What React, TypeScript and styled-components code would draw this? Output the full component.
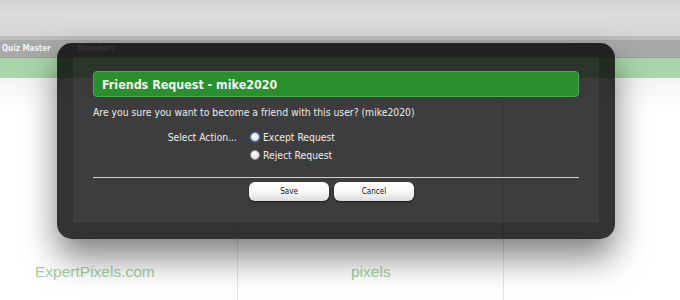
import React from "react";
import styled, { createGlobalStyle } from "styled-components";

const Global = createGlobalStyle`
  html, body { margin: 0; padding: 0; background: #ffffff; }
  body { width: 680px; height: 300px; overflow: hidden; font-family: "DejaVu Sans Condensed", "DejaVu Sans", Verdana, sans-serif; }
`;

const Page = styled.div`
  position: relative;
  width: 680px;
  height: 300px;
  display: flex;
  flex-direction: column;
  background: #ffffff;
  overflow: hidden;
`;

const TopArea = styled.div`
  height: 36px;
  background: linear-gradient(#d2d2d2, #dcdcdc 40%, #d6d6d6);
  border-bottom: 4px solid #bdbdbd;
`;

const NavBar = styled.div`
  height: 17px;
  background: #a9a9a9;
  display: flex;
  align-items: center;
  gap: 27px;
  padding-left: 2px;
  border-bottom: 1px solid #9c9c9c;
`;

const NavItem = styled.span`
  font-size: 8px;
  font-weight: bold;
  color: #f4f4f4;
`;

const GreenBar = styled.div`
  height: 20px;
  background: #a9d6a8;
`;

const Content = styled.div`
  flex: 1;
  display: grid;
  grid-template-columns: 224px 14px 266px 1fr;
  background: linear-gradient(#f3f3f3, #ffffff 30px);
`;

const Column = styled.div<{ $line?: boolean }>`
  position: relative;
  border-right: 1px solid ${(p) => (p.$line ? "#e6e6e6" : "transparent")};
  display: flex;
  align-items: flex-end;
  padding-bottom: 19px;
`;

const BrandText = styled.span<{ $indent: number }>`
  font-family: "Liberation Sans", Arial, sans-serif;
  font-size: 15.5px;
  color: #a6d0a6;
  padding-left: ${(p) => p.$indent}px;
`;

const Modal = styled.div`
  position: absolute;
  left: 57px;
  top: 43px;
  width: 558px;
  height: 196px;
  box-sizing: border-box;
  padding: 14px 16px 16px 16px;
  border-radius: 15px;
  background: rgba(0, 0, 0, 0.8);
  box-shadow: 0 18px 34px rgba(0, 0, 0, 0.5);
  display: flex;
`;

const Panel = styled.div`
  flex: 1;
  background: rgba(255, 255, 255, 0.05);
  padding: 14px 20px 0;
  display: flex;
  flex-direction: column;
`;

const Header = styled.div`
  height: 26px;
  box-sizing: border-box;
  border: 1px solid #55a655;
  border-radius: 4px;
  background: #2a902e;
  display: flex;
  align-items: center;
  padding-left: 8px;
  font-size: 12.4px;
  font-weight: bold;
  color: #f2f2f2;
`;

const Question = styled.div`
  margin-top: 9px;
  font-size: 10.3px;
  color: #ececec;
  line-height: 12px;
`;

const Form = styled.div`
  margin-top: 13px;
  display: grid;
  grid-template-columns: 144px 1fr;
  column-gap: 13px;
  row-gap: 6px;
  align-items: center;
`;

const Label = styled.span<{ $hidden?: boolean }>`
  text-align: right;
  font-size: 10.3px;
  color: #ececec;
  visibility: ${(p) => (p.$hidden ? "hidden" : "visible")};
`;

const Option = styled.label`
  display: flex;
  align-items: center;
  gap: 3px;
  font-size: 10.3px;
  color: #ececec;
  height: 12px;
`;

const Radio = styled.input<{ $focus?: boolean }>`
  appearance: none;
  margin: 0;
  width: 10px;
  height: 10px;
  border-radius: 50%;
  background: radial-gradient(circle at 40% 35%, #ffffff, #dcdcdc 70%, #bdbdbd);
  border: 1px solid ${(p) => (p.$focus ? "#5b6ea8" : "#9a9a9a")};
  box-shadow: ${(p) => (p.$focus ? "0 0 0 1px #3f4f80" : "none")};
`;

const Divider = styled.div`
  margin-top: 16px;
  height: 1px;
  background: #d0d0d0;
`;

const Buttons = styled.div`
  margin-top: 4px;
  padding-left: 156px;
  display: flex;
  gap: 5px;
`;

const Button = styled.button`
  width: 80px;
  height: 19px;
  border: none;
  border-radius: 6px;
  background: linear-gradient(#ffffff, #f6f6f6 55%, #dcdcdc);
  box-shadow: 0 1px 2px rgba(0, 0, 0, 0.6);
  font-family: "DejaVu Sans Condensed", "DejaVu Sans", Verdana, sans-serif;
  font-size: 8px;
  color: #111;
  padding: 0;
`;

export default function App() {
  return (
    <>
      <Global />
      <Page>
        <TopArea />
        <NavBar>
          <NavItem>Quiz Master</NavItem>
          <NavItem>Members</NavItem>
        </NavBar>
        <GreenBar />
        <Content>
          <Column>
            <BrandText $indent={35}>ExpertPixels.com</BrandText>
          </Column>
          <Column $line />
          <Column $line>
            <BrandText $indent={113}>pixels</BrandText>
          </Column>
          <Column />
        </Content>
        <Modal>
          <Panel>
            <Header>Friends Request - mike2020</Header>
            <Question>Are you sure you want to become a friend with this user? (mike2020)</Question>
            <Form>
              <Label>Select Action...</Label>
              <Option>
                <Radio type="radio" name="action" $focus />
                Except Request
              </Option>
              <Label $hidden>Select Action...</Label>
              <Option>
                <Radio type="radio" name="action" />
                Reject Request
              </Option>
            </Form>
            <Divider />
            <Buttons>
              <Button>Save</Button>
              <Button>Cancel</Button>
            </Buttons>
          </Panel>
        </Modal>
      </Page>
    </>
  );
}
